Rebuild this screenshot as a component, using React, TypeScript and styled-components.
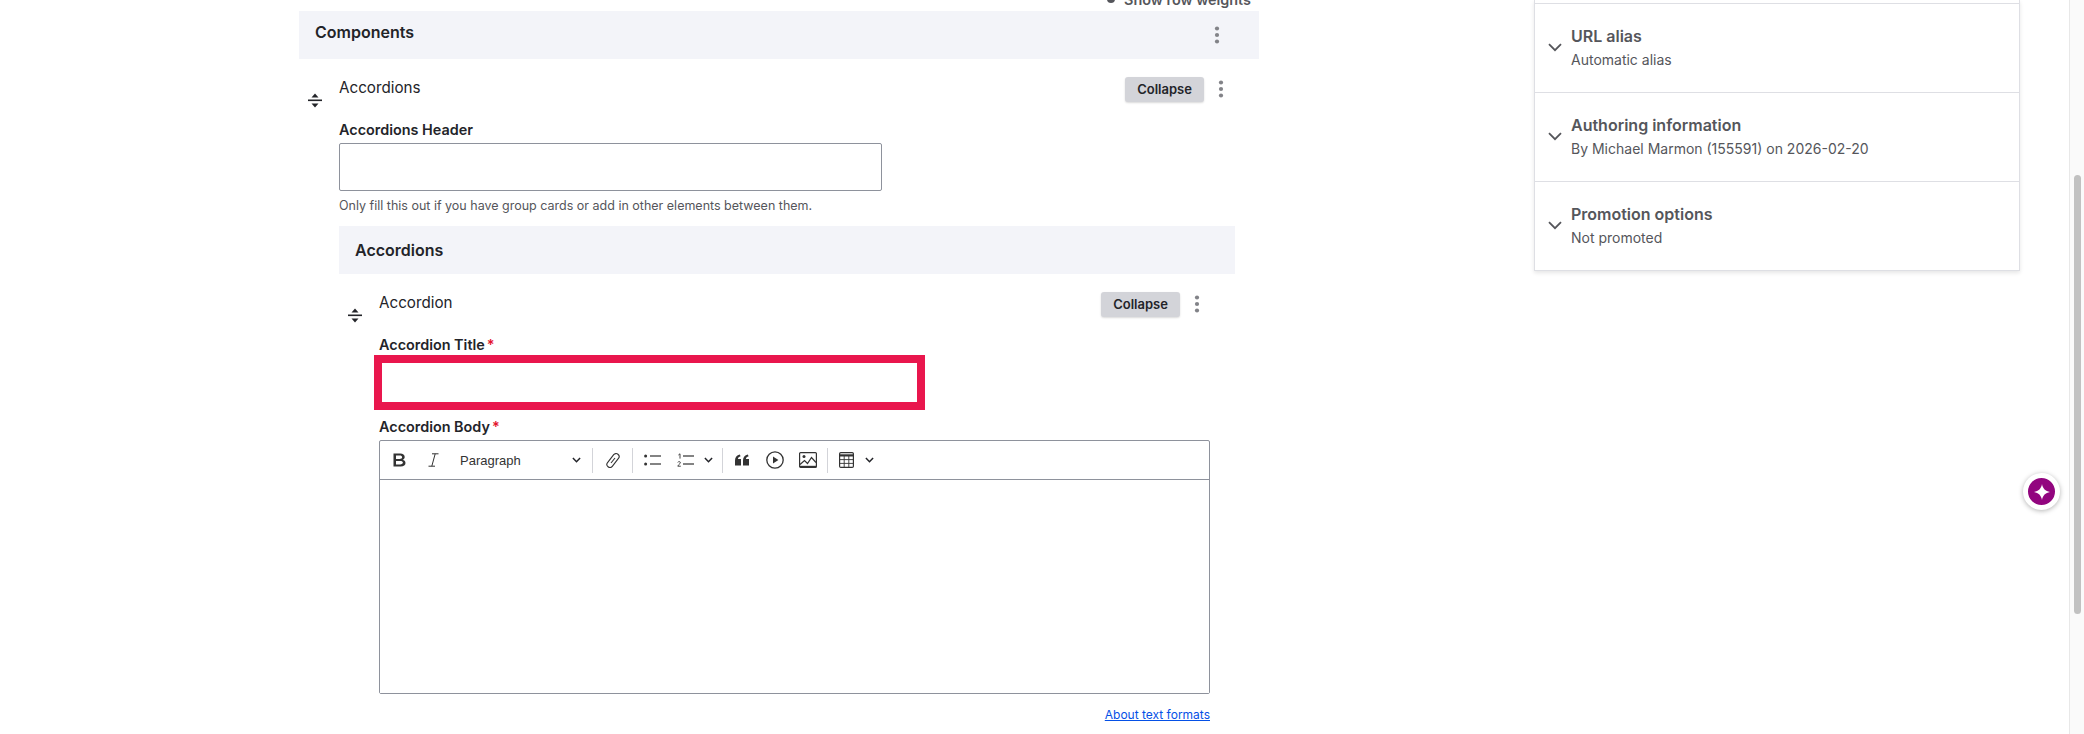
import React from 'react';
import styled, { createGlobalStyle } from 'styled-components';

const GlobalStyle = createGlobalStyle`
    html, body {
        margin: 0;
        background: #fff;
        overflow: hidden;
    }
    * {
        box-sizing: border-box;
    }
`;

const Handle = () => (
    <HandleBox width="16" height="15" viewBox="0 0 16 15">
        <path d="M8 0.5 L11.5 4.5 H4.5 Z" fill="#232429" />
        <rect x="1" y="6.5" width="14" height="1.6" fill="#232429" />
        <path d="M8 14.5 L4.5 10.5 H11.5 Z" fill="#232429" />
    </HandleBox>
);

const Kebab = () => (
    <KebabBox width="6" height="18" viewBox="0 0 6 18">
        <circle cx="3" cy="2.5" r="2.1" fill="#828388" />
        <circle cx="3" cy="9" r="2.1" fill="#828388" />
        <circle cx="3" cy="15.5" r="2.1" fill="#828388" />
    </KebabBox>
);

const Chevron = ({ size = 9 }: { size?: number }) => (
    <svg width={size} height={size * 0.7} viewBox="0 0 10 7" fill="none" stroke="#232429" strokeWidth="1.7">
        <path d="M1 1.2 L5 5.2 L9 1.2" />
    </svg>
);

const Section = ({ title, sub }: { title: string; sub: string }) => (
    <SideSection>
        <SideChevron width="14" height="9" viewBox="0 0 14 9" fill="none" stroke="#55565b" strokeWidth="1.8">
            <path d="M1 1.2 L7 7.2 L13 1.2" />
        </SideChevron>
        <div>
            <SideTitle>{title}</SideTitle>
            <SideSub>{sub}</SideSub>
        </div>
    </SideSection>
);

const App = () => {
    return (
        <Page>
            <GlobalStyle />
            <Content>
                <WeightsRow>
                    <WeightsDot />
                    Show row weights
                </WeightsRow>
                <Bar>
                    <BarTitle $lift={3}>Components</BarTitle>
                    <BarKebab><Kebab /></BarKebab>
                </Bar>

                <Item>
                    <HandleCol><Handle /></HandleCol>
                    <ItemBody>
                        <ItemHead>
                            <ItemTitle>Accordions</ItemTitle>
                            <CollapseButton>Collapse</CollapseButton>
                            <Kebab />
                        </ItemHead>
                        <Label>Accordions Header</Label>
                        <TextInput />
                        <Description>Only fill this out if you have group cards or add in other elements between them.</Description>

                        <NestedBar>
                            <BarTitle $lift={0}>Accordions</BarTitle>
                        </NestedBar>

                        <Item>
                            <HandleCol><Handle /></HandleCol>
                            <ItemBody>
                                <ItemHead>
                                    <ItemTitle>Accordion</ItemTitle>
                                    <CollapseButton>Collapse</CollapseButton>
                                    <Kebab />
                                </ItemHead>
                                <Label>Accordion Title<Required>*</Required></Label>
                                <ErrorInput />
                                <BodyLabel>Accordion Body<Required>*</Required></BodyLabel>
                                <Editor>
                                    <Toolbar>
                                        <Tool $left={13} width="13" height="14" viewBox="0 0 13 14">
                                            <path fillRule="evenodd" fill="#333" d="M0.5 0.5H7.2C10 0.5 11.7 1.9 11.7 3.9C11.7 5.3 10.8 6.3 9.6 6.7C11.2 7 12.5 8.2 12.5 10C12.5 12.2 10.7 13.5 7.8 13.5H0.5ZM3 2.6V5.9H6.6C8.2 5.9 9.1 5.2 9.1 4.2C9.1 3.2 8.2 2.6 6.6 2.6ZM3 7.9V11.4H7.1C8.9 11.4 9.9 10.8 9.9 9.6C9.9 8.5 8.9 7.9 7.1 7.9Z" />
                                        </Tool>
                                        <Tool $left={22} width="11" height="14" viewBox="0 0 11 14" fill="none" stroke="#333" strokeWidth="1">
                                            <path d="M4 0.8H10.5M0.5 13.2H7M7.2 0.8L3.8 13.2" />
                                        </Tool>
                                        <ParagraphText>Paragraph</ParagraphText>
                                        <ChevronSlot $left={53}><Chevron /></ChevronSlot>
                                        <Separator $left={11} />
                                        <Tool $left={13} width="14" height="15" viewBox="0 0 14 15" fill="none" stroke="#333" strokeWidth="1.1">
                                            <rect x="4" y="-0.5" width="6" height="16" rx="3" transform="rotate(38 7 7.5)" />
                                            <path d="M9 5L5 10" />
                                        </Tool>
                                        <Separator $left={12} />
                                        <Tool $left={11} width="17" height="12" viewBox="0 0 17 12">
                                            <circle cx="1.6" cy="2" r="1.5" fill="#333" />
                                            <circle cx="1.6" cy="10" r="1.5" fill="#333" />
                                            <rect x="6" y="1.4" width="11" height="1.2" fill="#333" />
                                            <rect x="6" y="9.4" width="11" height="1.2" fill="#333" />
                                        </Tool>
                                        <Tool $left={16} width="17" height="14" viewBox="0 0 17 14">
                                            <path d="M1.4 2L3 0.8V5.6" fill="none" stroke="#333" strokeWidth="0.9" />
                                            <path d="M0.8 9.4C1.2 8.2 3.6 8.4 3.4 9.8C3.3 10.9 1.2 11.6 0.8 13.2H3.8" fill="none" stroke="#333" strokeWidth="0.9" />
                                            <rect x="6" y="2.4" width="11" height="1.2" fill="#333" />
                                            <rect x="6" y="10.4" width="11" height="1.2" fill="#333" />
                                        </Tool>
                                        <ChevronSlot $left={10}><Chevron size={9} /></ChevronSlot>
                                        <Separator $left={9} />
                                        <Tool $left={12} width="14" height="12" viewBox="0 0 14 12">
                                            <path fill="#333" d="M0 11.5V6.5C0 3.2 1.8 1 4.8 0.5L5.6 2.2C4 2.6 3.1 3.6 2.9 5H6V11.5ZM8 11.5V6.5C8 3.2 9.8 1 12.8 0.5L13.6 2.2C12 2.6 11.1 3.6 10.9 5H14V11.5Z" />
                                        </Tool>
                                        <Tool $left={17} width="18" height="18" viewBox="0 0 18 18">
                                            <circle cx="9" cy="9" r="8.2" fill="none" stroke="#333" strokeWidth="1.3" />
                                            <path d="M7 5.4L12.4 9L7 12.6Z" fill="#333" />
                                        </Tool>
                                        <Tool $left={15} width="18" height="16" viewBox="0 0 18 16" fill="none" stroke="#333">
                                            <rect x="0.6" y="0.6" width="16.8" height="14.8" rx="1" strokeWidth="1.2" />
                                            <circle cx="5" cy="4.6" r="1.5" fill="#333" stroke="none" />
                                            <path d="M1 12.5L5.5 8.5L8.5 11.5L12.5 5.5L17 10.5" strokeWidth="1.2" />
                                            <path d="M1 14.5H17" strokeWidth="1.4" />
                                        </Tool>
                                        <Separator $left={10} />
                                        <Tool $left={11} width="15" height="16" viewBox="0 0 15 16" fill="none" stroke="#333">
                                            <rect x="0.6" y="0.6" width="13.8" height="14.8" rx="1.2" strokeWidth="1.2" />
                                            <path d="M0.6 3.4H14.4" strokeWidth="2.2" />
                                            <path d="M0.6 7.6H14.4M0.6 11.4H14.4M5.2 4V15.4M9.8 4V15.4" strokeWidth="0.9" />
                                        </Tool>
                                        <ChevronSlot $left={11}><Chevron size={9} /></ChevronSlot>
                                    </Toolbar>
                                    <EditArea />
                                </Editor>
                                <HelpRow>
                                    <HelpLink href="#">About text formats</HelpLink>
                                </HelpRow>
                            </ItemBody>
                        </Item>
                    </ItemBody>
                </Item>
            </Content>

            <Sidebar>
                <SideSliver />
                <Section title="URL alias" sub="Automatic alias" />
                <Section title="Authoring information" sub="By Michael Marmon (155591) on 2026-02-20" />
                <Section title="Promotion options" sub="Not promoted" />
            </Sidebar>

            <ScrollTrack>
                <ScrollThumb />
            </ScrollTrack>

            <FloatButton>
                <svg width="16" height="16" viewBox="0 0 16 16">
                    <path fill="#fff" d="M8 0C8.8 4.6 11.4 7.2 16 8C11.4 8.8 8.8 11.4 8 16C7.2 11.4 4.6 8.8 0 8C4.6 7.2 7.2 4.6 8 0Z" />
                </svg>
            </FloatButton>
        </Page>
    );
};

const Page = styled.div`
    position: relative;
    display: flex;
    width: 2084px;
    height: 734px;
    overflow: hidden;
    font-family: Inter, "Liberation Sans", sans-serif;
    color: #232429;
`;

const Content = styled.main`
    width: 960px;
    margin-left: 299px;
    flex: none;
`;

/* the page is scrolled, only the lower part of this line shows */
const WeightsRow = styled.div`
    display: flex;
    align-items: flex-end;
    justify-content: flex-end;
    height: 11px;
    padding: 0 8px 2px 0;
    overflow: hidden;
    font-size: 14.4px;
    line-height: 18px;
    font-weight: 600;
    color: #55565b;
    white-space: nowrap;
`;

const WeightsDot = styled.span`
    width: 8px;
    height: 8px;
    margin: 0 9px 0 0;
    border-radius: 50%;
    background: #55565b;
    transform: translateY(-6px);
`;

const Bar = styled.div`
    display: flex;
    align-items: center;
    justify-content: space-between;
    height: 48px;
    padding: 0 39px 0 16px;
    background: #f3f4f9;
`;

const NestedBar = styled(Bar)`
    margin-top: 11px;
`;

const BarTitle = styled.h3<{ $lift: number }>`
    margin: 0;
    font-size: 16px;
    line-height: 20px;
    font-weight: 600;
    color: #232429;
    transform: translateY(-${p => p.$lift}px);
`;

const BarKebab = styled.div`
    display: flex;
`;

const Item = styled.div`
    display: grid;
    grid-template-columns: 40px 1fr;
    margin-top: 18px;
`;

const HandleCol = styled.div`
    padding: 16px 0 0 8px;
`;

const HandleBox = styled.svg`
    display: block;
`;

const KebabBox = styled.svg`
    display: block;
    flex: none;
    margin-bottom: 1px;
`;

const ItemBody = styled.div`
    min-width: 0;
    padding-right: 24px;
`;

const ItemHead = styled.div`
    display: flex;
    align-items: center;
    height: 25px;
    padding-right: 11px;
`;

const ItemTitle = styled.div`
    flex: 1;
    align-self: flex-start;
    padding-top: 1px;
    font-size: 15.2px;
    line-height: 20px;
`;

const CollapseButton = styled.button`
    height: 25px;
    width: 79px;
    margin-right: 14px;
    padding: 0 0 2px;
    border: 0;
    border-radius: 3px;
    background: #d3d4d9;
    box-shadow: 0 1px 2px rgba(0, 0, 0, 0.15);
    font-family: inherit;
    font-size: 13px;
    font-weight: 600;
    color: #232429;
`;

const Label = styled.div`
    margin: 19px 0 4px;
    font-size: 14.4px;
    line-height: 18px;
    font-weight: 600;
    color: #232429;
`;

const BodyLabel = styled(Label)`
    margin-top: 8px;
`;

const Required = styled.span`
    margin-left: 2px;
    color: #e3122c;
`;

const TextInput = styled.div`
    width: 543px;
    height: 48px;
    border: 1px solid #8e929c;
    border-radius: 2px;
    background: #fff;
`;

const ErrorInput = styled.div`
    width: 551px;
    height: 55px;
    margin: -3px 0 0 -5px;
    border: 8px solid #e9164d;
    background: #fff;
`;

const Description = styled.div`
    margin-top: 6px;
    font-size: 12.5px;
    line-height: 18px;
    color: #55565b;
`;

const Editor = styled.div`
    width: 831px;
    height: 254px;
    border: 1px solid #8e929c;
    border-radius: 2px;
    display: flex;
    flex-direction: column;
`;

const Toolbar = styled.div`
    display: flex;
    align-items: center;
    flex: none;
    height: 39px;
    border-bottom: 1px solid #8e929c;
`;

const Tool = styled.svg<{ $left: number }>`
    flex: none;
    display: block;
    margin-left: ${p => p.$left}px;
`;

const ParagraphText = styled.span`
    width: 59px;
    margin-left: 21px;
    font-family: "Liberation Sans", sans-serif;
    font-size: 13px;
    color: #333;
    white-space: nowrap;
`;

const ChevronSlot = styled.span<{ $left: number }>`
    display: flex;
    margin-left: ${p => p.$left}px;
`;

const Separator = styled.span<{ $left: number }>`
    width: 1px;
    height: 25px;
    margin-left: ${p => p.$left}px;
    background: #d3d4d9;
`;

const EditArea = styled.div`
    flex: 1;
    background: #fff;
`;

const HelpRow = styled.div`
    width: 831px;
    margin-top: 10px;
    text-align: right;
    line-height: 18px;
`;

const HelpLink = styled.a`
    font-size: 12px;
    color: #0550e6;
`;

const Sidebar = styled.aside`
    width: 486px;
    height: 271px;
    margin-left: 275px;
    flex: none;
    background: #fff;
    border: 1px solid #dedfe4;
    border-top: 0;
    box-shadow: 0 2px 4px rgba(0, 0, 0, 0.1);
`;

const SideSliver = styled.div`
    height: 4px;
    border-bottom: 1px solid #dedfe4;
`;

const SideSection = styled.div`
    display: flex;
    align-items: center;
    height: 89px;
    padding-left: 13px;
    border-bottom: 1px solid #dedfe4;

    &:last-child {
        height: 88px;
        border-bottom: 0;
    }
`;

const SideChevron = styled.svg`
    flex: none;
    margin: 0 9px 2px 0;
`;

const SideTitle = styled.div`
    font-size: 16px;
    line-height: 20px;
    font-weight: 600;
    color: #55565b;
`;

const SideSub = styled.div`
    margin-top: 4px;
    font-size: 14px;
    line-height: 20px;
    color: #55565b;
`;

const ScrollTrack = styled.div`
    width: 15px;
    height: 734px;
    margin-left: 49px;
    flex: none;
    padding: 175px 3px 120px 4px;
    background: #fafafa;
    border-left: 1px solid #e8e8e8;
`;

const ScrollThumb = styled.div`
    height: 100%;
    border-radius: 4px;
    background: #c1c1c1;
`;

const FloatButton = styled.div`
    position: absolute;
    left: 2023px;
    top: 473px;
    display: flex;
    align-items: center;
    justify-content: center;
    width: 37px;
    height: 37px;
    border: 5px solid #fff;
    border-radius: 50%;
    background: #92057f;
    box-shadow: 0 1px 5px rgba(0, 0, 0, 0.3);
`;

export default App;
